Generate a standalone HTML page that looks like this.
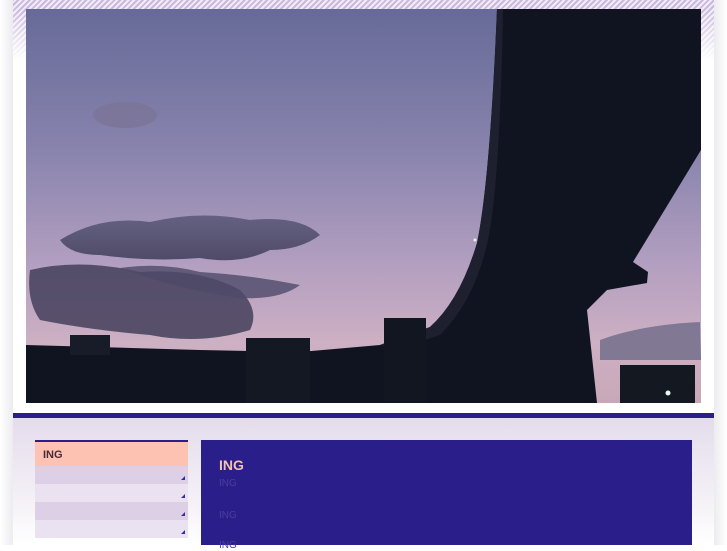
<!DOCTYPE html>
<html><head><meta charset="utf-8"><style>
*{margin:0;padding:0;box-sizing:border-box}
body{width:727px;height:545px;overflow:hidden;background:#fff;font-family:"Liberation Sans",sans-serif;position:relative}
.top{position:absolute;left:0;top:0;width:727px;height:60px;background:repeating-linear-gradient(135deg,#c9b9de 0 2px,#f2ecf7 2px 4px);}
.topfade{position:absolute;left:0;top:0;width:727px;height:60px;background:linear-gradient(#fff0 0,#fff0 8px,#fff 60px)}
.wrap{position:absolute;left:13px;top:0;width:701px;height:545px;background:linear-gradient(#fff0 0 410px,#fff 410px);}
.side{position:absolute;left:0;top:0;width:13px;height:545px;background:linear-gradient(90deg,#fff,#ececf0)}
.side2{position:absolute;left:714px;top:0;width:13px;height:545px;background:linear-gradient(90deg,#ececf0,#fff)}
.photo{position:absolute;left:26px;top:9px;width:675px;height:394px;background:#fff}
.bar{position:absolute;left:13px;top:413px;width:701px;height:5px;background:#2a1f8a}
.low{position:absolute;left:13px;top:418px;width:701px;height:127px;background:linear-gradient(#e4dcec,#f4f0f6 80px,#fff)}
.menu{position:absolute;left:35px;top:440px;width:153px;height:96px;border-top:2px solid #2a1f8a}
.menu div{height:18px;position:relative}
.menu .h{height:24px;background:#fdc2b2;color:#4a2a3a;font-weight:bold;font-size:11px;padding:7px 0 0 8px}
.a{background:#ddd0e6}.b{background:#ebe2f1}
.menu div.a::after,.menu div.b::after{content:"";position:absolute;right:3px;bottom:4px;border-left:4px solid transparent;border-bottom:4px solid #3a2a9a}
.main{position:absolute;left:201px;top:440px;width:491px;height:105px;background:#2a1f8a}
.main h2{position:absolute;left:18px;top:17px;color:#f4c0b0;font-size:14px;font-weight:bold}
.main p{position:absolute;left:18px;color:#4a3e9e;font-size:10px}
</style></head><body>
<div class="top"></div><div class="topfade"></div>
<div class="side"></div><div class="side2"></div>
<div class="wrap"></div>
<svg class="photo" viewBox="26 9 675 394" width="675" height="394">
<defs>
<linearGradient id="sky" x1="0" y1="0" x2="0" y2="1">
<stop offset="0" stop-color="#676a98"/><stop offset="0.35" stop-color="#8783ad"/><stop offset="0.65" stop-color="#b39fc0"/><stop offset="0.85" stop-color="#cdb0c3"/><stop offset="1" stop-color="#c8a8b8"/></linearGradient>
<linearGradient id="cl" x1="0" y1="0" x2="0" y2="1"><stop offset="0" stop-color="#5a5878"/><stop offset="1" stop-color="#3e3c58"/></linearGradient>
</defs>
<rect x="26" y="9" width="675" height="394" fill="url(#sky)"/>
<ellipse cx="125" cy="115" rx="32" ry="13" fill="#7a7496" opacity=".8"/>
<path d="M60 240 Q100 215 150 222 Q200 210 250 220 Q300 215 320 235 Q300 250 270 250 Q240 265 200 258 Q150 262 100 255 Q70 255 60 240Z" fill="url(#cl)" opacity=".85"/>
<path d="M30 270 Q80 258 140 272 Q200 268 240 290 Q260 310 250 330 Q200 345 150 335 Q90 330 40 320 Q26 300 30 270Z" fill="#44405c" opacity=".85"/>
<path d="M120 268 Q160 262 200 272 Q250 275 300 285 Q280 300 240 298 Q180 290 120 268Z" fill="#4e4a68" opacity=".8"/>
<path d="M600 340 Q640 325 700 322 L701 360 L600 360Z" fill="#6e6a88" opacity=".8"/>
<path d="M497 9 L701 9 L701 150 L633 262 L648 272 L647 283 L607 290 L587 310 L597 403 L26 403 L26 345 L200 350 L300 352 L380 345 L430 327 Q460 300 477 243 Q490 180 497 9Z" fill="#101420"/>
<path d="M497 9 Q490 180 477 243 Q460 300 430 327 L380 345 L400 348 L440 335 Q475 300 488 240 Q500 180 503 9Z" fill="#1e2030"/>
<rect x="246" y="338" width="64" height="65" fill="#141822"/>
<rect x="384" y="318" width="42" height="85" fill="#121620"/>
<rect x="70" y="335" width="40" height="20" fill="#181c28"/>
<rect x="620" y="365" width="75" height="38" fill="#141820"/>
<circle cx="668" cy="393" r="2.5" fill="#e8f8f0"/>
<circle cx="475" cy="240" r="1.5" fill="#eee"/>
</svg>
<div class="bar"></div>
<div class="low"></div>
<div class="menu">
<div class="h">ING</div>
<div class="a"></div><div class="b"></div><div class="a"></div><div class="b"></div>
</div>
<div class="main">
<h2>ING</h2>
<p style="top:38px">ING</p>
<p style="top:70px">ING</p>
<p style="top:100px">ING</p>
</div>
</body></html>
